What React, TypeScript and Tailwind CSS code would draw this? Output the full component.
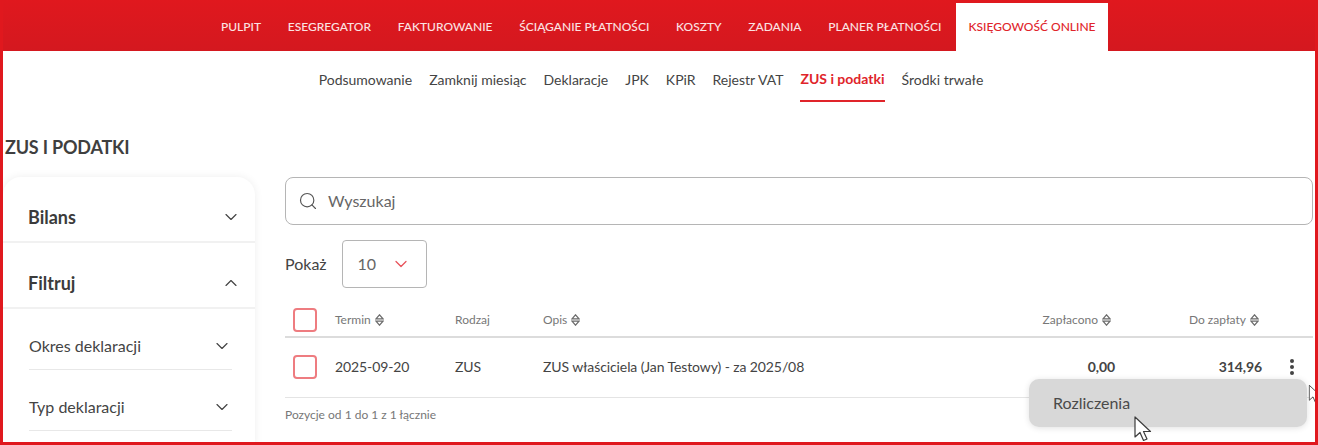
import { ChevronDown, ChevronUp, Search } from 'lucide-react';

const topNav = ['PULPIT', 'ESEGREGATOR', 'FAKTUROWANIE', 'ŚCIĄGANIE PŁATNOŚCI', 'KOSZTY', 'ZADANIA', 'PLANER PŁATNOŚCI'];
const subNav = ['Podsumowanie', 'Zamknij miesiąc', 'Deklaracje', 'JPK', 'KPiR', 'Rejestr VAT', 'ZUS i podatki', 'Środki trwałe'];

function SortIcon() {
  return (
    <svg width="9" height="12" viewBox="0 0 9 12" fill="none" stroke="#6b6b6b" strokeWidth="1.200" className="shrink-0">
      <path d="M1 4.800 4.500 0.800 8 4.800Z" />
      <path d="M1 7.200 4.500 11.200 8 7.200Z" />
    </svg>
  );
}

function Cursor({ className }: { className: string }) {
  return (
    <svg width="20" height="28" viewBox="0 0 20 28" className={className}>
      <path d="M1 1v20l5-4.500 3.500 8 3.500-1.500-3.500-7.500h7Z" fill="#fff" stroke="#3d3d3d" strokeWidth="1.200" strokeLinejoin="round" />
    </svg>
  );
}

function Checkbox() {
  return <div className="h-[24px] w-[24px] rounded-[4px] border-2 border-[#ee7c80] bg-white" />;
}

function SideHead({ label, open }: { label: string; open?: boolean }) {
  return (
    <div className="flex h-[66px] items-center justify-between border-b-2 border-[#f1f1f1] pl-[25px] pr-[14px] pt-[16px]">
      <span className="text-[18px] font-bold text-[#3b3b3b]">{label}</span>
      {open ? <ChevronUp size={20} strokeWidth={1.4} color="#444" /> : <ChevronDown size={20} strokeWidth={1.4} color="#444" />}
    </div>
  );
}

function SideFilter({ label }: { label: string }) {
  return (
    <div className="ml-[26px] mr-[23px] flex h-[61px] items-center justify-between border-b border-[#e8e8e8] pt-[14px]">
      <span className="text-[16px] text-[#444]">{label}</span>
      <ChevronDown size={20} strokeWidth={1.4} color="#444" />
    </div>
  );
}

const rowGrid = 'grid grid-cols-[42px_120px_88px_1fr_150px_148px_54px] items-center';

export default function App() {
  return (
    <div className="relative h-[445px] w-[1318px] overflow-hidden border-x-[3px] border-b-[3px] border-[#e0181e] bg-white font-['Lato',sans-serif]">
      <header className="flex h-[51px] items-end bg-gradient-to-b from-[#e0181e] to-[#d4181f] pl-[206px]">
        <nav className="flex h-full items-center text-[12px] font-medium text-[#fbe3e3]">
          {topNav.map(item => (
            <span key={item} className="mr-[2.7px] px-[12px] pt-[3px]">{item}</span>
          ))}
        </nav>
        <div className="flex h-[48px] w-[152px] items-center justify-center bg-white text-[12px] font-medium text-[#e0242a]">
          KSIĘGOWOŚĆ ONLINE
        </div>
      </header>

      <nav className="flex h-[51px] items-start justify-center gap-[17px] pr-[16px] text-[14px] text-[#444]">
        {subNav.map(item => (
          <span
            key={item}
            className={item === 'ZUS i podatki'
              ? 'flex h-[51px] items-center border-b-2 border-[#e0242a] pt-[6px] font-bold text-[#e0242a]'
              : 'flex h-[51px] items-center pt-[6px]'}
          >
            {item}
          </span>
        ))}
      </nav>

      <h1 className="mt-[30px] pl-[2px] text-[18px] font-bold leading-[30px] tracking-[-0.2px] text-[#3f3f3f]">ZUS I PODATKI</h1>

      <div className="mt-[15px] flex">
        <aside className="h-[270px] w-[252px] shrink-0 rounded-t-[18px] bg-white shadow-[0_0_8px_rgba(0,0,0,0.07)]">
          <SideHead label="Bilans" />
          <SideHead label="Filtruj" open />
          <SideFilter label="Okres deklaracji" />
          <SideFilter label="Typ deklaracji" />
        </aside>

        <main className="ml-[30px] flex-1 pr-[2px]">
          <div className="flex h-[48px] items-center gap-[10px] rounded-[8px] border border-[#b5b5b5] pl-[12px]">
            <Search size={20} strokeWidth={1.4} color="#555" />
            <span className="text-[16px] text-[#666]">Wyszukaj</span>
          </div>

          <div className="mt-[15px] flex items-center gap-[15px]">
            <span className="text-[16px] text-[#444]">Pokaż</span>
            <div className="flex h-[48px] w-[85px] items-center gap-[15px] rounded-[4px] border border-[#b5b5b5] pl-[15px]">
              <span className="text-[16px] text-[#666]">10</span>
              <ChevronDown size={20} strokeWidth={1.5} color="#e8525a" />
            </div>
          </div>

          <div className={`${rowGrid} mt-[16px] h-[34px] border-b-2 border-[#dcdcdc] pl-[8px] text-[12px] text-[#777]`}>
            <Checkbox />
            <span className="flex items-center gap-[4px]">Termin <SortIcon /></span>
            <span>Rodzaj</span>
            <span className="flex items-center gap-[4px]">Opis <SortIcon /></span>
            <span className="flex items-center justify-end gap-[4px]">Zapłacono <SortIcon /></span>
            <span className="flex items-center justify-end gap-[4px]">Do zapłaty <SortIcon /></span>
            <span />
          </div>

          <div className={`${rowGrid} h-[60px] border-b border-[#e4e4e4] pb-[2px] pl-[8px] text-[14px] tracking-[-0.1px] text-[#444]`}>
            <Checkbox />
            <span>2025-09-20</span>
            <span>ZUS</span>
            <span>ZUS właściciela (Jan Testowy) - za 2025/08</span>
            <span className="-mr-[4px] text-right font-bold">0,00</span>
            <span className="-mr-[3px] text-right font-bold">314,96</span>
            <div className="flex flex-col items-center gap-[2px] pl-[11px]">
              <i className="h-[4px] w-[4px] rounded-full bg-[#444]" />
              <i className="h-[4px] w-[4px] rounded-full bg-[#444]" />
              <i className="h-[4px] w-[4px] rounded-full bg-[#444]" />
            </div>
          </div>

          <p className="mt-[8px] text-[12px] text-[#777]">Pozycje od 1 do 1 z 1 łącznie</p>
        </main>
      </div>

      <div className="absolute left-[1026px] top-[379px] flex h-[48px] w-[278px] items-center rounded-[10px] bg-[#d8d8d8] pl-[24px] text-[16px] text-[#4a4a4a] shadow-[0_1px_6px_rgba(0,0,0,0.12)]">
        Rozliczenia
      </div>
      <Cursor className="absolute left-[1131px] top-[416px]" />
      <Cursor className="absolute left-[1303px] top-[381px] scale-75" />
    </div>
  );
}
